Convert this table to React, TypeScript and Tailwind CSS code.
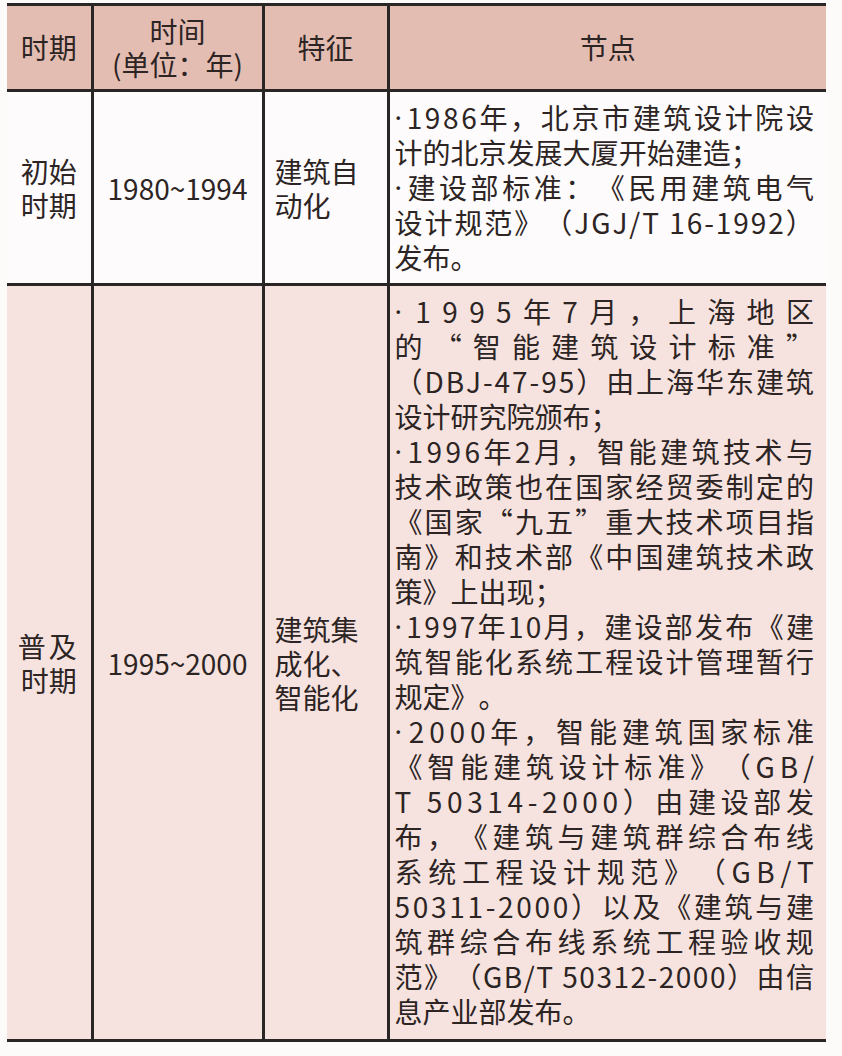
import React from 'react';

type Line = { text: string; last?: boolean };

const ROW1: Line[] = [
  { text: '·1986年，北京市建筑设计院设' },
  { text: '计的北京发展大厦开始建造；', last: true },
  { text: '·建设部标准：《民用建筑电气' },
  { text: '设计规范》（JGJ/T 16-1992）' },
  { text: '发布。', last: true },
];

const ROW2: Line[] = [
  { text: '·1995年7月，上海地区' },
  { text: '的“智能建筑设计标准”' },
  { text: '（DBJ-47-95）由上海华东建筑' },
  { text: '设计研究院颁布；', last: true },
  { text: '·1996年2月，智能建筑技术与' },
  { text: '技术政策也在国家经贸委制定的' },
  { text: '《国家“九五”重大技术项目指' },
  { text: '南》和技术部《中国建筑技术政' },
  { text: '策》上出现；', last: true },
  { text: '·1997年10月，建设部发布《建' },
  { text: '筑智能化系统工程设计管理暂行' },
  { text: '规定》。', last: true },
  { text: '·2000年，智能建筑国家标准' },
  { text: '《智能建筑设计标准》（GB/' },
  { text: 'T 50314-2000）由建设部发' },
  { text: '布，《建筑与建筑群综合布线' },
  { text: '系统工程设计规范》（GB/T' },
  { text: '50311-2000）以及《建筑与建' },
  { text: '筑群综合布线系统工程验收规' },
  { text: '范》（GB/T 50312-2000）由信' },
  { text: '息产业部发布。', last: true },
];

// the middle dot is narrow in the original, so take it from the latin font
function Glyph({ ch }: { ch: string }) {
  if (ch === '·') return <span className="font-['Noto_Sans',sans-serif] pr-[2px]">·</span>;
  if (ch === ' ') return <span>{'\u00a0'}</span>;
  return <span>{ch}</span>;
}

function Lines({ lines }: { lines: Line[] }) {
  return (
    <div className="leading-[35px]">
      {lines.map((l, i) => (
        <div key={i} className={l.last ? 'flex whitespace-nowrap' : 'flex justify-between whitespace-nowrap'}>
          {Array.from(l.text).map((ch, j) => (
            <Glyph key={j} ch={ch} />
          ))}
        </div>
      ))}
    </div>
  );
}

export default function App() {
  return (
    <div
      lang="zh-CN"
      className="min-h-[1056px] bg-[#fdfafa] pl-[7px] pt-[3px] text-[28px] text-[#2d2424] font-['Noto_Sans_CJK_SC','Noto_Sans',sans-serif]"
    >
      <table className="w-[819px] table-fixed border-t-[3px] border-b-[3px] border-[#2b2626]">
        <colgroup>
          <col className="w-[85px]" />
          <col className="w-[171px]" />
          <col className="w-[125px]" />
          <col className="w-[438px]" />
        </colgroup>
        <thead>
          <tr className="h-[86px] bg-[#e4bdb2] border-b-[3px] border-[#2b2626] leading-[33px]">
            <th className="font-normal text-center align-middle">时期</th>
            <th className="font-normal text-center align-middle border-l-[3px] border-[#2b2626]">
              时间
              <br />
              (单位：年)
            </th>
            <th className="font-normal text-center align-middle border-l-[3px] border-[#2b2626]">特征</th>
            <th className="font-normal text-center align-middle border-l-[3px] border-[#2b2626]">节点</th>
          </tr>
        </thead>
        <tbody>
          <tr className="bg-[#fdfbfb] border-b-[3px] border-[#2b2626] leading-[34px]">
            <td className="text-center align-middle">
              初始
              <br />
              时期
            </td>
            <td className="text-center align-middle border-l-[3px] border-[#2b2626]">1980~1994</td>
            <td className="pl-[10px] text-left align-middle border-l-[3px] border-[#2b2626]">
              建筑自
              <br />
              动化
            </td>
            <td className="pl-[5px] pr-[12px] py-[8px] align-top border-l-[3px] border-[#2b2626]">
              <Lines lines={ROW1} />
            </td>
          </tr>
          <tr className="bg-[#f6e3df] leading-[34px]">
            <td className="text-center align-middle">
              <span className="tracking-[3px]">普及</span>
              <br />
              时期
            </td>
            <td className="text-center align-middle border-l-[3px] border-[#2b2626]">1995~2000</td>
            <td className="pl-[10px] text-left align-middle border-l-[3px] border-[#2b2626]">
              建筑集
              <br />
              成化、
              <br />
              智能化
            </td>
            <td className="pl-[5px] pr-[12px] pt-[8px] pb-[10px] align-top border-l-[3px] border-[#2b2626]">
              <Lines lines={ROW2} />
            </td>
          </tr>
        </tbody>
      </table>
    </div>
  );
}
